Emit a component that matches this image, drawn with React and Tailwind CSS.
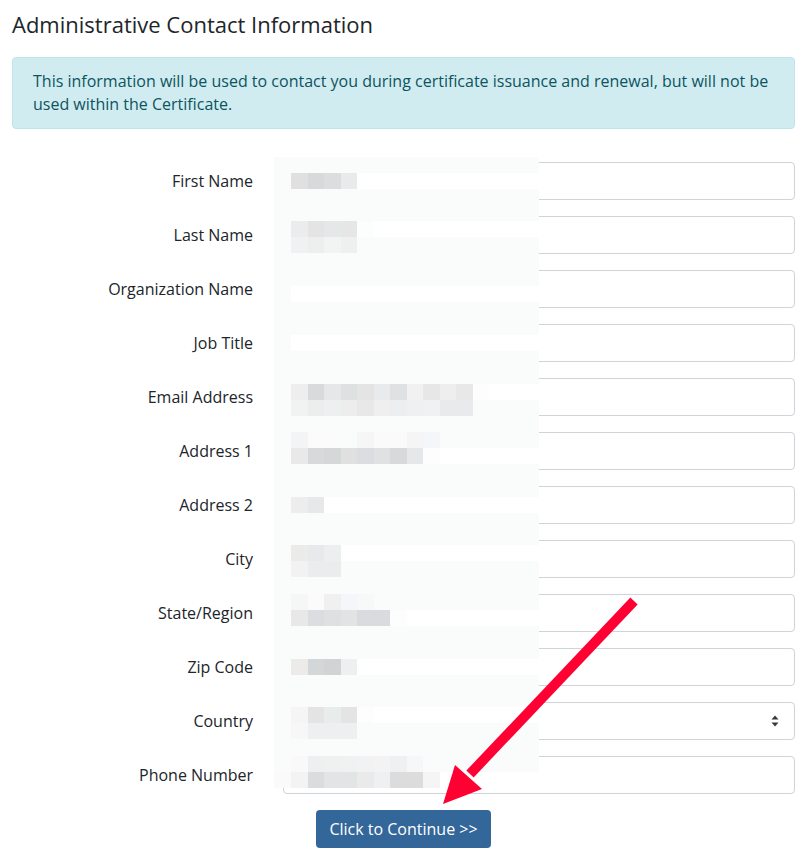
import React from 'react';

const FIELDS = [
  { label: 'First Name' },
  { label: 'Last Name' },
  { label: 'Organization Name' },
  { label: 'Job Title' },
  { label: 'Email Address' },
  { label: 'Address 1' },
  { label: 'Address 2' },
  { label: 'City' },
  { label: 'State/Region' },
  { label: 'Zip Code' },
  { label: 'Country', select: true },
  { label: 'Phone Number' },
];

// pixelated redaction over the filled-in values (page coordinates)
const BLUR = [
  { y: 173, cells: ['#e0e0e0', '#d8d9db', '#dcdddf', '#e9eaec'], tail: true },
  { y: 221, cells: ['#ebecee', '#e4e4e4', '#e6e7e8', '#e6e6e6', '#fcfefd'], tail: true },
  { y: 237, cells: ['#f0f1f3', '#eeeeee', '#f2f3f3', '#efefef'] },
  { y: 286, cells: [], tail: true },
  { y: 335, cells: [], tail: true },
  { y: 384, cells: ['#eeeeee', '#d9dadc', '#e6e7e9', '#dfe0e2', '#e4e4e4', '#e9eaec', '#e0e1e3', '#f1f1f1', '#e6e7e6', '#eeeeee', '#e7e8e7', '#fdfdfd'], tail: true },
  { y: 400, cells: ['#f1f2f2', '#eceded', '#eeeff0', '#ededed', '#e8e8e8', '#efefef', '#edeef0', '#eff0f1', '#f0f1f2', '#e9eaec', '#e9eaec'] },
  { y: 432, cells: ['#f3f4f6', '#fbfbfb', '#fbfbfb', '#fafbfb', '#f6f6f6', '#fafafa', '#fafafa', '#f5f5f5', '#f5f6f9'] },
  { y: 448, cells: ['#e9e9e9', '#d8d9db', '#d6d7d8', '#dfe0df', '#dcdde1', '#e0e1e3', '#d8d9db', '#e6e7e9', '#fdfdfd'], tail: true },
  { y: 497, cells: ['#ededed', '#e7e8ea'], tail: true },
  { y: 545, cells: ['#ebebe9', '#e8e9eb', '#eceef0'], tail: true },
  { y: 561, cells: ['#f2f2f2', '#ebecee', '#ebecee'] },
  { y: 594, cells: ['#f5f6f6', '#fbfbfb', '#f0f0f0', '#f5f6f9', '#f9f8f8'] },
  { y: 610, cells: ['#e8e8e8', '#dcdde1', '#dfe0e2', '#e3e3e3', '#dadbdf', '#dadbdf', '#fdfdfd'], tail: true },
  { y: 659, cells: ['#ecebe9', '#d4d7da', '#d2d3d5', '#eeeff1'], tail: true },
  { y: 707, cells: ['#f5f5f5', '#e4e4e4', '#e8ecea', '#e4e4e4', '#fdfdfd'], tail: true },
  { y: 723, cells: ['#f7f7f7', '#eeeff1', '#eeeff1', '#eeeff1'] },
  { y: 756, cells: ['#f9f9f9', '#eeeff1', '#f0f0f0', '#f0f1f1', '#f2f2f4', '#f3f3f3', '#eff0f2', '#f6f7f9'] },
  { y: 772, cells: ['#f3f3f3', '#dbdcde', '#e3e4e6', '#e3e4e6', '#e9eae9', '#eff0f2', '#dcdcdc', '#dcdcdc', '#f5f5f5'] },
];

function Redaction() {
  return (
    <>
      <div className="absolute left-[274px] top-[157px] w-[265px] h-[615px] bg-[#fafbfb] pointer-events-none" />
      <div className="absolute left-[274px] top-[772px] w-[166px] h-[16px] bg-[#fafafa] pointer-events-none" />
      {BLUR.map((row) => {
        const end = 291 + row.cells.length * 16.5;
        return (
          <React.Fragment key={row.y}>
            {row.cells.map((c, i) => (
              <div
                key={i}
                className="absolute h-[16px] pointer-events-none"
                style={{ top: row.y, left: 291 + i * 16.5, width: 16.5, background: c }}
              />
            ))}
            {row.tail && (
              <div
                className="absolute h-[16px] bg-white pointer-events-none"
                style={{ top: row.y, left: end, width: 539 - end }}
              />
            )}
          </React.Fragment>
        );
      })}
    </>
  );
}

function Arrow() {
  return (
    <svg className="absolute left-0 top-0 pointer-events-none" width="809" height="857" viewBox="0 0 809 857">
      <line x1="634" y1="601" x2="470" y2="774" stroke="#ff0033" strokeWidth="10" />
      <polygon points="443,804 455,765 482,789" fill="#ff0033" />
    </svg>
  );
}

export default function App() {
  return (
    <div className="relative w-[809px] h-[857px] bg-white overflow-hidden font-['Open_Sans',sans-serif] text-[#212529]">
      <div className="pl-[12px] pr-[14px] pt-[8px]">
        <h3 className="text-[22px] leading-[32px] font-normal">Administrative Contact Information</h3>

        <div className="mt-[17px] rounded-[4px] border border-[#bee5eb] bg-[#d1ecf1] text-[#0c5460] text-[16px] leading-[23px] px-[20px] py-[12px]">
          This information will be used to contact you during certificate issuance and renewal, but will not be used within the Certificate.
        </div>

        <div className="mt-[33px] flex flex-col gap-[16px]">
          {FIELDS.map((f) => (
            <div key={f.label} className="grid grid-cols-[256px_1fr] gap-[15px] items-center">
              <label className="text-right pr-[15px] text-[16px] leading-[24px] text-[#212529]">{f.label}</label>
              {f.select ? (
                <div className="h-[38px] rounded-[4px] border border-[#ced4da] bg-white flex items-center justify-end pr-[15px]">
                  <svg width="8" height="12" viewBox="0 0 8 12">
                    <path d="M4 0.5 L7.5 4.5 H0.5 Z" fill="#343a40" />
                    <path d="M4 11.5 L7.5 7.5 H0.5 Z" fill="#343a40" />
                  </svg>
                </div>
              ) : (
                <div className="h-[38px] rounded-[4px] border border-[#ced4da] bg-white" />
              )}
            </div>
          ))}
        </div>

        <div className="mt-[16px] flex justify-center">
          <button className="h-[38px] w-[175px] rounded-[4px] bg-[#336699] text-white text-[16px] leading-[24px]">
            Click to Continue &gt;&gt;
          </button>
        </div>
      </div>

      <Redaction />
      <Arrow />
    </div>
  );
}
